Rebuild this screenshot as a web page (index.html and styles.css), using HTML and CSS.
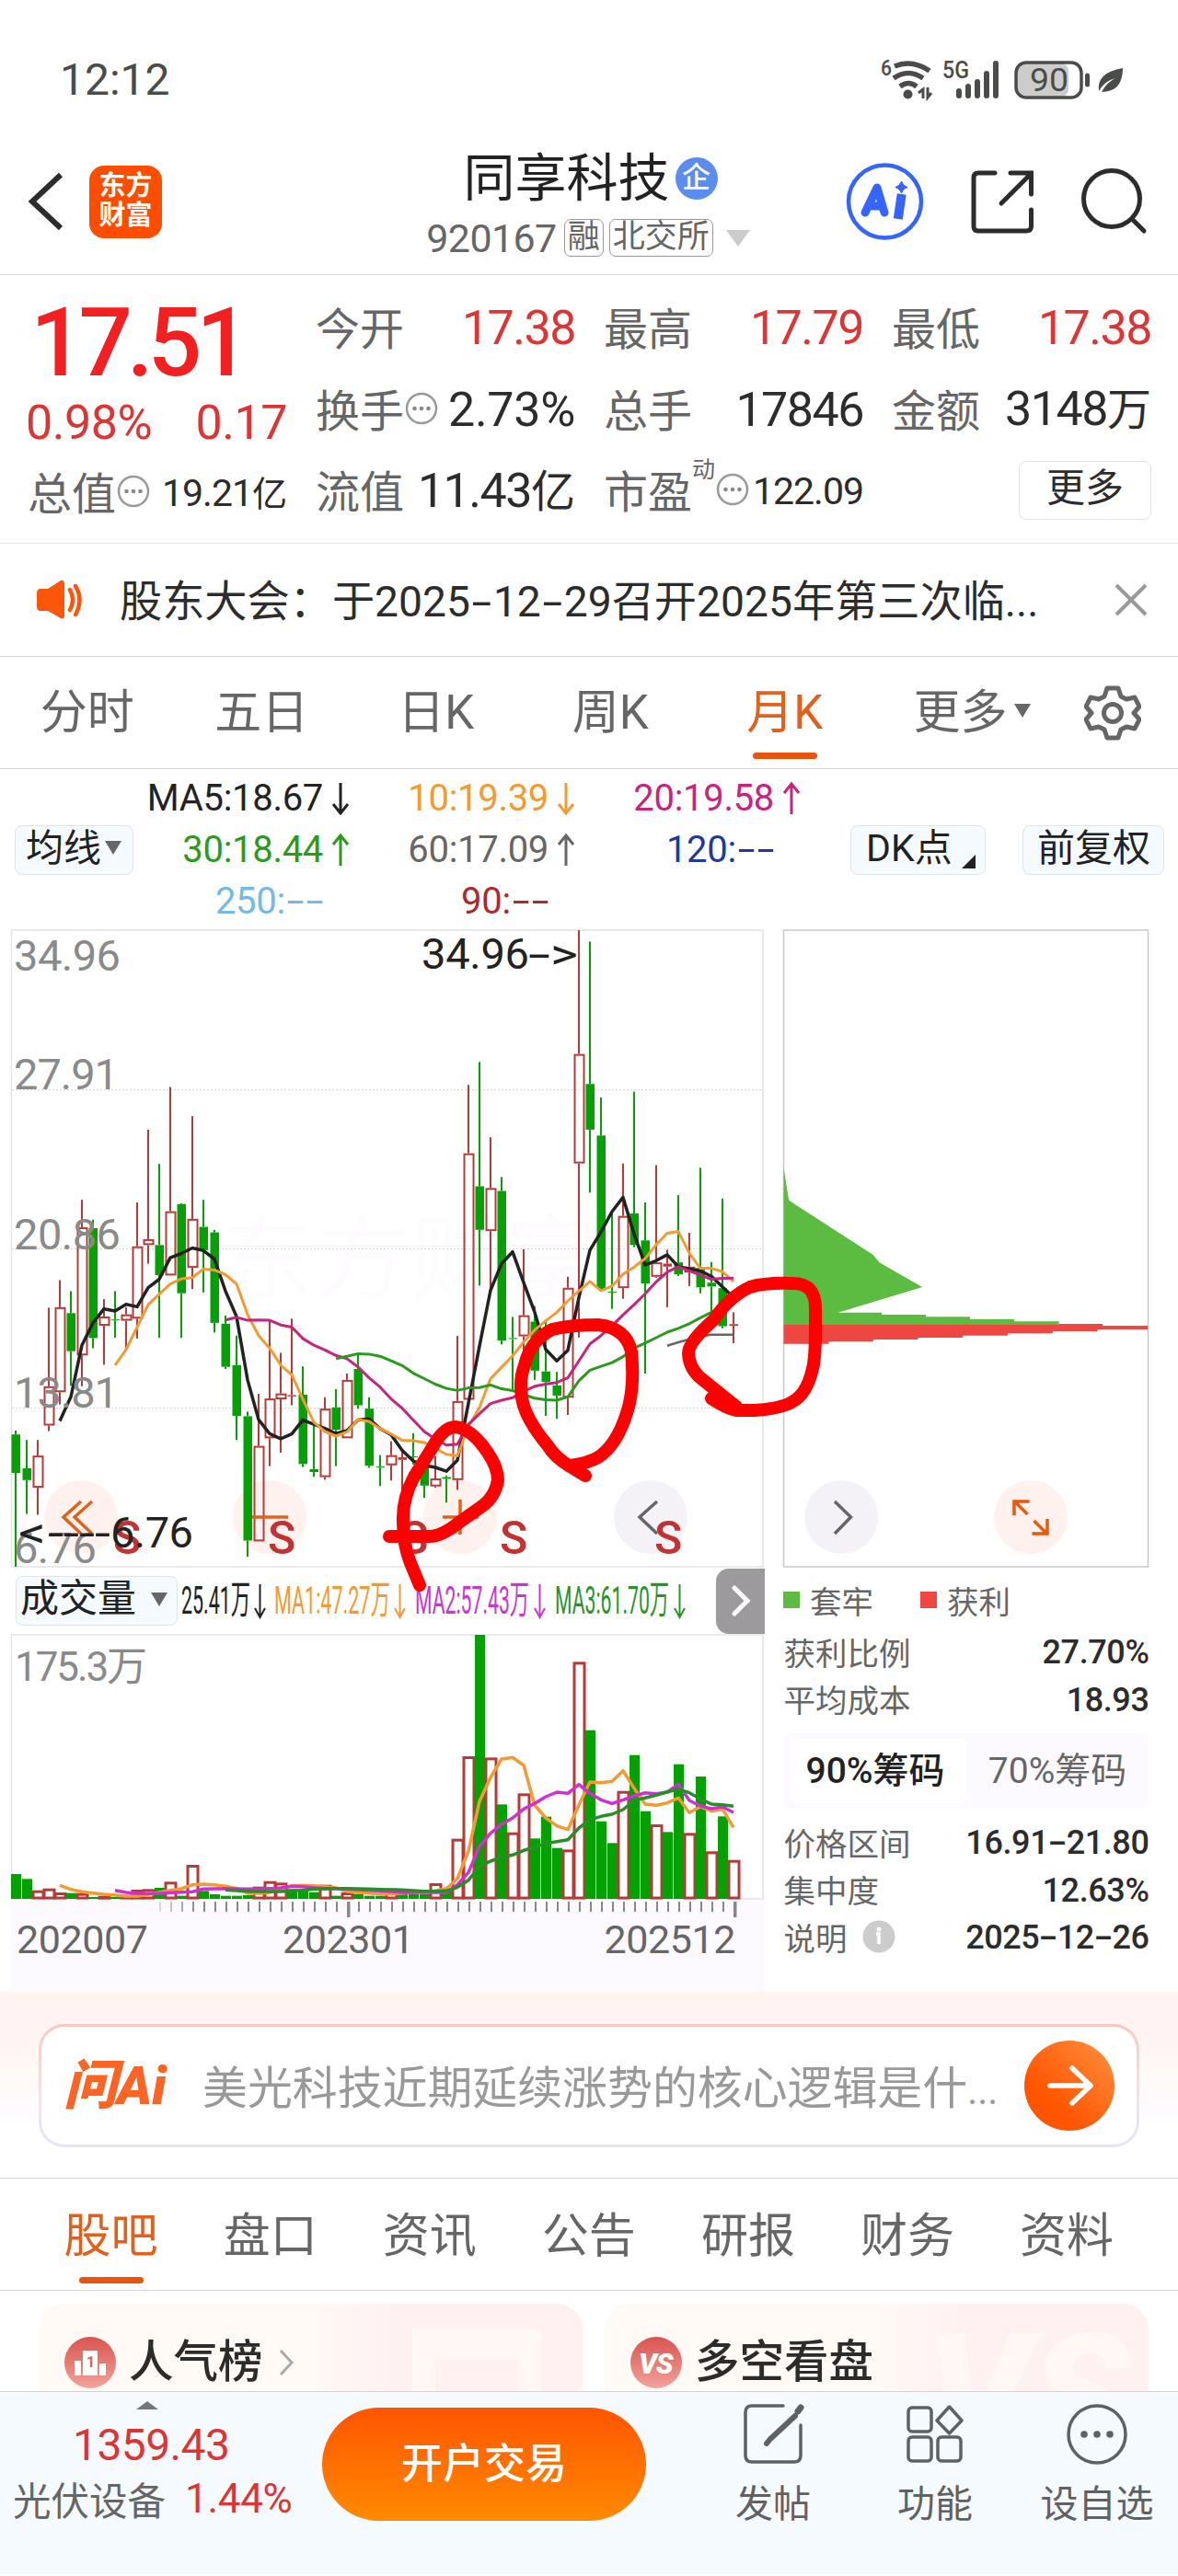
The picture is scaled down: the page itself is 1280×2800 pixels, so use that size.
FILE: index.html
```html
<!DOCTYPE html>
<html lang="zh-CN">
<head>
    <meta charset="UTF-8">
    <meta name="viewport" content="width=device-width, initial-scale=1.0">
    <title>同享科技 920167</title>
    <link rel="stylesheet" href="styles.css">
</head>
<body>
    <svg class="defs">
        <symbol id="arrow-down" viewBox="0 0 20 36"><path d="M10 1V34M2 24L10 34L18 24"/></symbol>
        <symbol id="arrow-up" viewBox="0 0 20 36"><path d="M10 35V2M2 12L10 2L18 12"/></symbol>
        <symbol id="more-dots" viewBox="0 0 36 36">
            <circle cx="18" cy="18" r="16" fill="none" stroke="#999" stroke-width="2.500"/>
            <g fill="#888"><circle cx="10.500" cy="18" r="2.300"/><circle cx="18" cy="18" r="2.300"/><circle cx="25.500" cy="18" r="2.300"/></g>
        </symbol>
    </svg>

    <!-- Status bar -->
    <div class="status">
        <span class="clock">12:12</span>
        <svg class="status-icons" width="272" height="50" viewBox="954 60 272 50">
            <g fill="none" stroke="#4a4c4a" stroke-width="5.500">
                <path d="M972 71Q991 63 1010 76"/>
                <path d="M971 84Q987 73 1003 84"/>
                <path d="M978 93Q987 86 996 93"/>
            </g>
            <circle cx="986.500" cy="101.500" r="5" fill="#4a4c4a"/>
            <path d="M998 100L1003 96V106M1008 94V105L1012 100" fill="none" stroke="#4a4c4a" stroke-width="3"/>
            <text x="957" y="81" font-size="23" font-weight="500" textLength="12" lengthAdjust="spacingAndGlyphs">6</text>
            <text x="1024" y="84" font-size="25" font-weight="500" textLength="29" lengthAdjust="spacingAndGlyphs">5G</text>
            <path d="M1042 98V103M1052 93V103M1062 88V103M1072 79V103M1082 68V103" stroke="#4a4c4a" stroke-width="6" stroke-linecap="round"/>
            <rect x="1105" y="68" width="56" height="36" rx="8" fill="#ccc"/>
            <rect x="1104" y="67" width="71" height="38" rx="11" fill="none" stroke="#4a4c4a" stroke-width="3.500"/>
            <text x="1119" y="98" font-size="35" textLength="42" lengthAdjust="spacingAndGlyphs">90</text>
            <path d="M1181.500 81V91" stroke="#4a4c4a" stroke-width="5" stroke-linecap="round"/>
            <path d="M1194 98Q1191 78 1220 73Q1220 99 1197 99Q1203 88 1212 84Q1200 87 1194 98Z" fill="#4a4c4a"/>
        </svg>
    </div>

    <!-- Title bar -->
    <header class="header">
        <div class="header-left">
            <svg width="42" height="70" viewBox="0 0 42 70"><path d="M38 6L7 35L38 64" fill="none" stroke="#2c2c2c" stroke-width="6"/></svg>
            <div class="logo">东方<br>财富</div>
        </div>
        <div class="title">
            <div class="title-name">同享科技<span class="badge">企</span></div>
            <div class="title-code"><span class="code">920167</span><span class="tag">融</span><span class="tag">北交所</span><i class="tri tri-light"></i></div>
        </div>
        <div class="header-right">
            <svg width="86" height="86" viewBox="918 176 86 86">
                <circle cx="961.500" cy="219" r="39.500" fill="#fff" stroke="#3565fa" stroke-width="4.500"/>
                <!-- mark of the assistant -->
                <path d="M940 231L953 204L961 231M947 224H958" fill="none" stroke="#3565fa" stroke-width="9" stroke-linecap="round" stroke-linejoin="round"/>
                <path d="M979 216L976.500 233" stroke="#3565fa" stroke-width="10" stroke-linecap="square"/>
                <path d="M979.500 197Q981 202 986 203.500Q981 205 979.500 210Q978 205 973 203.500Q978 202 979.500 197Z" fill="#3565fa" stroke="#3565fa"/>
            </svg>
            <svg width="72" height="72" viewBox="1052 183 72 72">
                <path d="M1080 188H1062Q1057 188 1057 193V246Q1057 251 1062 251H1114Q1119.500 251 1119.500 246V228M1097 188H1119.500V211M1119 189L1087 221" fill="none" stroke="#2c2c2c" stroke-width="5" stroke-linecap="round"/>
            </svg>
            <svg width="74" height="74" viewBox="1174 182 74 74">
                <circle cx="1208" cy="216" r="30.500" fill="none" stroke="#2c2c2c" stroke-width="5"/>
                <path d="M1230 238L1243 251" stroke="#2c2c2c" stroke-width="5" stroke-linecap="round"/>
            </svg>
        </div>
    </header>

    <!-- Quote -->
    <section class="quote">
        <div class="quote-main">
            <div class="price">17.51</div>
            <div class="change"><span>0.98%</span><span>0.17</span></div>
            <div class="cell"><label>总值</label><svg class="dots"><use href="#more-dots"/></svg><b class="small">19.21<em class="small-unit">亿</em></b></div>
        </div>
        <div class="quote-grid">
            <div class="cell"><label>今开</label><b class="up">17.38</b></div>
            <div class="cell"><label>最高</label><b class="up">17.79</b></div>
            <div class="cell"><label>最低</label><b class="up">17.38</b></div>
            <div class="cell"><label>换手</label><svg class="dots"><use href="#more-dots"/></svg><b class="rate">2.73%</b></div>
            <div class="cell"><label>总手</label><b>17846</b></div>
            <div class="cell"><label>金额</label><b>3148<em>万</em></b></div>
            <div class="cell"><label>流值</label><b>11.43<em>亿</em></b></div>
            <div class="cell"><label>市盈</label><sup>动</sup><svg class="dots"><use href="#more-dots"/></svg><b class="small">122.09</b></div>
            <div class="cell cell-more"><span class="more-btn">更多</span></div>
        </div>
    </section>

    <!-- Notice -->
    <div class="notice">
        <svg width="54" height="44" viewBox="38 630 54 44">
            <path d="M44 640H52L66 631Q70 630 70 635V669Q70 674 66 672L52 664H44Q40 664 40 659V645Q40 640 44 640Z" fill="#fb560a"/>
            <path d="M76 641Q82 652 76 663M82 637Q91 652 82 668" fill="none" stroke="#fb560a" stroke-width="4.500" stroke-linecap="round"/>
        </svg>
        <p class="notice-text">股东大会：于2025<i class="dash">-</i>12<i class="dash">-</i>29召开2025年第三次临...</p>
        <svg width="36" height="36" viewBox="0 0 36 36"><path d="M2 2L34 34M34 2L2 34" stroke="#999" stroke-width="4"/></svg>
    </div>

    <!-- Period tabs -->
    <nav class="periods">
        <span>分时</span>
        <span>五日</span>
        <span>日K</span>
        <span>周K</span>
        <span class="active">月K</span>
        <span class="period-more">更多<i class="tri"></i></span>
        <svg width="62" height="62" viewBox="0 0 62 62" fill="none" stroke="#666" stroke-width="5" stroke-linejoin="round">
            <path d="M25 4H37L40 13L46 16L55 14L60 24L54 31L60 38L55 48L46 46L40 49L37 58H25L22 49L16 46L7 48L2 38L8 31L2 24L7 14L16 16L22 13Z"/>
            <circle cx="31" cy="31" r="9.500"/>
        </svg>
    </nav>

    <!-- Moving average legend -->
    <div class="ma-bar">
        <span class="chip-btn ma-btn">均线<i class="tri"></i></span>
        <div class="ma-list">
            <span class="c-black">MA5:18.67<svg class="arrow"><use href="#arrow-down"/></svg></span>
            <span class="c-orange">10:19.39<svg class="arrow"><use href="#arrow-down"/></svg></span>
            <span class="c-pink">20:19.58<svg class="arrow"><use href="#arrow-up"/></svg></span>
            <span class="c-green">30:18.44<svg class="arrow"><use href="#arrow-up"/></svg></span>
            <span class="c-gray">60:17.09<svg class="arrow"><use href="#arrow-up"/></svg></span>
            <span class="c-navy no-arrow">120:<i class="dash">-</i><i class="dash">-</i></span>
            <span class="c-sky no-arrow">250:<i class="dash">-</i><i class="dash">-</i></span>
            <span class="c-red no-arrow">90:<i class="dash">-</i><i class="dash">-</i></span>
        </div>
        <span class="chip-btn dk-btn">DK点<i class="corner"></i></span>
        <span class="chip-btn fq-btn">前复权</span>
    </div>

    <!-- Charts -->
    <section class="charts">
        <div class="charts-left">
            <svg class="kline" width="820" height="694" viewBox="11 1011 820 694">
                <text class="watermark" x="240" y="1405" textLength="410">东方财富</text>
                <rect x="12.500" y="1012" width="816.500" height="692" fill="none" stroke="#e2e2e2" stroke-width="1.500"/>
                <path d="M13 1185.500H829M13 1358.500H829M13 1531.500H829" stroke="#d4d4d4" stroke-dasharray="2 2"/>
                <g fill="#fff1ed">
                    <circle cx="88" cy="1650" r="40"/>
                    <circle cx="293" cy="1650" r="40"/>
                    <circle cx="500" cy="1650" r="40"/>
                    <circle cx="707" cy="1650" r="40" fill="#f5f2f7"/>
                </g>
                <g id="candles"></g>
                <g id="averages"></g>
                <g class="axis">
                    <text x="15" y="1056" textLength="116">34.96</text>
                    <text x="15" y="1185" textLength="114">27.91</text>
                    <text x="15" y="1359" textLength="116">20.86</text>
                    <text x="15" y="1531" textLength="114">13.81</text>
                    <text x="15" y="1700" textLength="90">6.76</text>
                </g>
                <g class="signal">
                    <text x="123" y="1690">S</text>
                    <text x="291" y="1690">S</text>
                    <text x="435" y="1690">S</text>
                    <text x="543" y="1690">S</text>
                    <text x="711" y="1690">S</text>
                </g>
                <g fill="none" stroke="#e0601c" stroke-width="3.500">
                    <path d="M88 1633L69 1650L88 1668M100 1633L81 1650L100 1668"/>
                    <path d="M274 1650H313"/>
                    <path d="M481 1650H520M500 1631V1669"/>
                    <path d="M714 1633L695 1650L714 1668" stroke="#666"/>
                </g>
                <g class="extreme">
                    <text x="458" y="1054" textLength="117">34.96</text>
                    <text x="574" y="1054" textLength="24" lengthAdjust="spacingAndGlyphs">-</text>
                    <text x="598" y="1054" textLength="30" lengthAdjust="spacingAndGlyphs">&gt;</text>
                    <text x="20" y="1683" textLength="30" lengthAdjust="spacingAndGlyphs">&lt;</text>
                    <text x="52" y="1683" textLength="68" lengthAdjust="spacingAndGlyphs">----</text>
                    <text x="120" y="1683" textLength="90">6.76</text>
                </g>
            </svg>

            <div class="vol-bar">
                <span class="chip-btn vol-btn">成交量<i class="tri"></i></span>
                <svg class="vol-legend" width="560" height="54" viewBox="195 1714 560 54">
                    <text class="f-black" x="197" y="1755" textLength="75" lengthAdjust="spacingAndGlyphs">25.41万</text>
                    <text class="f-orange" x="298" y="1755" textLength="126" lengthAdjust="spacingAndGlyphs">MA1:47.27万</text>
                    <text class="f-purple" x="451" y="1755" textLength="124" lengthAdjust="spacingAndGlyphs">MA2:57.43万</text>
                    <text class="f-green" x="603" y="1755" textLength="124" lengthAdjust="spacingAndGlyphs">MA3:61.70万</text>
                    <g fill="none" stroke-width="2">
                        <path d="M282.500 1723V1759M277 1749L282.500 1759L288 1749" stroke="#222"/>
                        <path d="M434.500 1723V1759M429 1749L434.500 1759L440 1749" stroke="#f39b32"/>
                        <path d="M586.500 1723V1759M581 1749L586.500 1759L592 1749" stroke="#c837cf"/>
                        <path d="M738.500 1723V1759M733 1749L738.500 1759L744 1749" stroke="#2a942a"/>
                    </g>
                </svg>
                <span class="vol-next"><svg width="22" height="36" viewBox="0 0 22 36"><path d="M4 4L18 18L4 32" fill="none" stroke="#fff" stroke-width="5" stroke-linecap="round"/></svg></span>
            </div>

            <svg class="volume" width="820" height="289" viewBox="11 1777 820 289">
                <rect x="12.500" y="1778" width="816.500" height="287" fill="none" stroke="#e2e2e2" stroke-width="1.500"/>
                <text class="vol-max" x="16" y="1828" textLength="144">175.3万</text>
                <g id="bars"></g>
                <g id="volumeAverages"></g>
            </svg>

            <div class="dates">
                <svg id="ticks" width="818" height="22" viewBox="12 2066 818 22"></svg>
                <div class="date-labels"><span>202007</span><span>202301</span><span>202512</span></div>
            </div>
        </div>

        <div class="charts-right">
            <svg class="chips" width="399" height="694" viewBox="849.500 1011 399 694">
                <rect x="851" y="1012" width="396" height="692" fill="none" stroke="#c8c8c8" stroke-width="1.500"/>
                <!-- trapped and profitable holders by price -->
                <g transform="translate(820 1240) scale(.33333)">
                    <path fill="#5cbc42" d="M93 90L110 197L385 375L405 400L545 480L270 563H413V570H557V577H700V585H845V592H990V603H93Z"/>
                    <path fill="#ee4742" d="M93 603H990V600H1133V606H1280V618H1116V624H970V631H823V638H677V645H531V651H385V658H240V665H93Z"/>
                </g>
                <circle cx="913.700" cy="1650" r="40" fill="#f5f2f7"/>
                <path d="M906.500 1633L924 1650L906.500 1668" fill="none" stroke="#666" stroke-width="3.500"/>
                <circle cx="1119.500" cy="1650" r="40" fill="#fff1ed"/>
                <path d="M1118 1633H1101.500V1648M1102 1633L1116 1647M1123 1654L1137 1668M1137.500 1652V1668H1121" fill="none" stroke="#e8590c" stroke-width="3.500"/>
            </svg>
            <div class="chip-legend">
                <span><i class="sq sq-green"></i>套牢</span>
                <span><i class="sq sq-red"></i>获利</span>
            </div>
            <div class="stat"><span>获利比例</span><b>27.70%</b></div>
            <div class="stat"><span>平均成本</span><b>18.93</b></div>
            <div class="chip-tabs"><span class="on">90%筹码</span><span>70%筹码</span></div>
            <div class="stat"><span>价格区间</span><b>16.91<i class="dash">-</i>21.80</b></div>
            <div class="stat"><span>集中度</span><b>12.63%</b></div>
            <div class="stat"><span class="stat-info">说明<svg width="36" height="36" viewBox="0 0 36 36"><circle cx="18" cy="18" r="17.500" fill="#ccc"/><circle cx="18" cy="10" r="2.500" fill="#fff"/><path d="M15 15H18V26" fill="none" stroke="#fff" stroke-width="3.500"/></svg></span><b>2025<i class="dash">-</i>12<i class="dash">-</i>26</b></div>
        </div>

        <!-- hand-drawn marks -->
        <svg class="marks" width="1280" height="760" viewBox="0 1000 1280 760">
            <path d="M423 1671H467Q480 1671 500 1655L524 1638Q538 1628 541 1610Q541 1596 530 1580Q513 1554 495 1552Q482 1552 470 1574L450 1606Q437 1630 438 1655Q438 1680 446 1700L456 1724"/>
            <path d="M636 1605L618 1594Q603 1585 595 1572Q570 1542 567 1520Q564 1500 570 1485Q576 1458 600 1446Q620 1441 650 1441Q680 1444 686 1470Q690 1510 681 1537Q670 1572 650 1585Q640 1591 620 1594"/>
            <path d="M773 1521Q790 1532 800 1534H820Q850 1532 862 1524Q878 1515 884 1484Q886 1470 886 1450V1425Q887 1396 862 1396Q830 1395 815 1400Q793 1410 775 1436Q748 1460 748 1472Q749 1490 764 1501L800 1530"/>
        </svg>
    </section>

    <!-- Ask AI -->
    <section class="ask">
        <div class="ask-box">
            <span class="ask-logo">问Ai</span>
            <span class="ask-text">美光科技近期延续涨势的核心逻辑是什<span class="ellipsis">...</span></span>
            <svg width="98" height="98" viewBox="0 0 98 98">
                <linearGradient id="go" x1="1" y1="0" x2="0.300" y2="0.700"><stop offset="0" stop-color="#ff9140"/><stop offset="1" stop-color="#ff5500"/></linearGradient>
                <circle cx="49" cy="49" r="49" fill="url(#go)"/>
                <path d="M28 49H72M52 30L72 49L52 68" fill="none" stroke="#fff" stroke-width="5.500" stroke-linecap="round" stroke-linejoin="round"/>
            </svg>
        </div>
    </section>

    <!-- Section tabs -->
    <nav class="sections">
        <span class="active">股吧</span>
        <span>盘口</span>
        <span>资讯</span>
        <span>公告</span>
        <span>研报</span>
        <span>财务</span>
        <span>资料</span>
    </nav>

    <div class="cards">
        <div class="card">
            <svg class="card-art" width="300" height="95" viewBox="0 0 300 95"><path d="M115 95V28H255V95H230V61H140V95Z" fill="#fff8f4"/></svg>
            <svg width="56" height="56" viewBox="0 0 56 56">
                <linearGradient id="badge" x1="0" y1="0" x2="0" y2="1"><stop offset="0" stop-color="#d9534e"/><stop offset="1" stop-color="#f2a39b"/></linearGradient>
                <circle cx="28" cy="28" r="28" fill="url(#badge)"/>
                <path d="M11 26H18V42H11ZM20 15H36V42H20ZM38 29H45V42H38Z" fill="#fff"/>
                <text x="24" y="33" font-size="16" font-weight="700" fill="#d9605a">1</text>
            </svg>
            <span>人气榜</span>
            <svg width="18" height="30" viewBox="0 0 18 30"><path d="M3 2L15 15L3 28" fill="none" stroke="#aaa" stroke-width="3"/></svg>
        </div>
        <div class="card">
            <svg class="card-art" width="290" height="95" viewBox="0 0 290 95">
                <text x="46" y="160" class="vs-art">VS</text>
            </svg>
            <svg width="56" height="56" viewBox="0 0 56 56">
                <circle cx="28" cy="28" r="28" fill="url(#badge)"/>
                <text x="9" y="40" class="vs">VS</text>
            </svg>
            <span>多空看盘</span>
        </div>
    </div>

    <!-- Bottom bar -->
    <footer class="footer">
        <div class="index">
            <i class="tri-up"></i>
            <div class="index-value">1359.43</div>
            <div class="index-name">光伏设备<b>1.44%</b></div>
        </div>
        <div class="open-btn">开户交易</div>
        <div class="tool">
            <svg width="70" height="70" viewBox="0 0 70 70" fill="none" stroke="#5f6163" stroke-width="3.500" stroke-linecap="round">
                <path d="M46 4H12Q5 4 5 11V58Q5 65 12 65H58Q65 65 65 58V25"/>
                <path d="M59 15L32 40L28 45" stroke-width="6"/><path d="M62 10L65 6" stroke-width="7"/>
            </svg>
            <span>发帖</span>
        </div>
        <div class="tool">
            <svg width="70" height="70" viewBox="0 0 70 70" fill="none" stroke="#5f6163" stroke-width="3.500" stroke-linejoin="round">
                <rect x="6" y="6" width="25" height="26" rx="4"/><rect x="6" y="38" width="25" height="26" rx="4"/><rect x="38" y="38" width="25" height="26" rx="4"/>
                <path d="M50.500 5L64 20L50.500 34L37 20Z"/>
            </svg>
            <span>功能</span>
        </div>
        <div class="tool">
            <svg width="70" height="70" viewBox="0 0 70 70">
                <circle cx="35" cy="35" r="31" fill="none" stroke="#5f6163" stroke-width="3.500"/>
                <g fill="#5f6163"><circle cx="21" cy="35" r="3.800"/><circle cx="35" cy="35" r="3.800"/><circle cx="49" cy="35" r="3.800"/></g>
            </svg>
            <span>设自选</span>
        </div>
    </footer>

    <script src="script.js"></script>
</body>
</html>
```
FILE: styles.css
```css
body {
    margin: 0;
    width: 1280px;
    height: 2800px;
    overflow: hidden;
    background: #fff;
    color: #2c2c2c;
    font-family: Roboto, "Noto Sans CJK SC", sans-serif;
    font-weight: 400;
}
svg {
    display: block;
    flex: none;
}
b, em, i {
    font-style: normal;
    font-weight: inherit;
}
.defs {
    width: 0;
    height: 0;
    position: absolute;
}
.tri {
    display: inline-block;
    border: 9px solid transparent;
    border-top: 15px solid #666;
    border-bottom: 0;
}
.dash {
    display: inline-block;
    width: .54em;
    text-align: center;
    transform: scaleX(1.7);
}

/* Status bar */
.status {
    height: 88px;
    padding: 42px 54px 0 65px;
    display: flex;
    align-items: center;
    justify-content: space-between;
    color: #4a4c4a;
}
.clock {
    font-size: 48px;
}
.status-icons text {
    fill: #4a4c4a;
}

/* Title bar */
.header {
    height: 168px;
    padding: 0 32px 0 28px;
    display: grid;
    grid-template-columns: 1fr auto 1fr;
    align-items: center;
    border-bottom: 1px solid #d4d4d4;
}
.header-left, .header-right {
    display: flex;
    align-items: center;
    padding-top: 10px;
}
.header-left {
    gap: 27px;
}
.header-right {
    justify-content: flex-end;
    gap: 49px;
}
.logo {
    width: 79px;
    height: 79px;
    border-radius: 16px;
    background: #ff4d00;
    color: #fff;
    font-size: 29px;
    font-weight: 700;
    line-height: 32px;
    text-align: center;
    box-sizing: border-box;
    padding-top: 6px;
}
.title {
    padding: 17px 0 0 2px;
}
.title-name {
    font-size: 56px;
    line-height: 70px;
    display: flex;
    align-items: center;
    justify-content: center;
    padding-left: 5px;
    color: #222;
}
.badge {
    width: 46px;
    height: 46px;
    margin-left: 6px;
    border-radius: 50%;
    background: #5b8cf0;
    color: #fff;
    font-size: 31px;
    font-weight: 500;
    line-height: 44px;
    text-align: center;
}
.title-code {
    display: flex;
    align-items: center;
    color: #666;
    height: 56px;
    margin-top: 2px;
}
.code {
    font-size: 43px;
    letter-spacing: -.6px;
    margin-right: 8px;
}
.tag {
    height: 39px;
    line-height: 38px;
    padding: 0 3px;
    margin-right: 6px;
    border: 1.5px solid #999;
    border-radius: 7px;
    font-size: 35px;
}
.tri-light {
    margin-left: 8px;
    border-width: 18px 13px 0;
    border-top-color: #ccc;
}

/* Quote */
.quote {
    height: 292px;
    padding: 0 29px 0 30px;
    display: flex;
    gap: 31px;
    border-bottom: 1px solid #e8e8e8;
    box-sizing: border-box;
}
.quote-main {
    width: 282px;
}
.price {
    height: 108px;
    padding: 19px 0 0 3px;
    font-size: 103px;
    font-weight: 500;
    line-height: 110px;
    letter-spacing: -6px;
    color: #f22020;
}
.change {
    height: 66px;
    margin-left: -2px;
    display: flex;
    align-items: center;
    justify-content: space-between;
    font-size: 52px;
    letter-spacing: -.5px;
    color: #dd3434;
}
.quote-grid {
    padding-top: 14px;
    display: grid;
    grid-template-columns: repeat(3, 282px);
    grid-template-rows: repeat(3, 88.5px);
    column-gap: 31px;
}
.cell {
    height: 88px;
    display: flex;
    align-items: center;
    font-size: 48px;
}
.cell label {
    margin: -6px 0 0 0;
    color: #666;
}
.cell b {
    margin-left: auto;
    font-size: 52px;
    line-height: 66px;
    letter-spacing: -1.5px;
}
.cell em {
    font-size: 48px;
    letter-spacing: 0;
}
.cell .rate {
    letter-spacing: -.3px;
}
.cell .small {
    font-size: 41px;
    letter-spacing: -1px;
}
.cell .small-unit {
    font-size: 38px;
}
.cell .up {
    color: #dd3434;
}
.cell sup {
    font-size: 25px;
    color: #666;
    align-self: flex-start;
    line-height: 42px;
}
.dots {
    width: 36px;
    height: 36px;
    margin: -4px 0 0 1px;
}
.cell-more {
    justify-content: flex-end;
}
.more-btn {
    width: 142px;
    height: 62px;
    margin-top: -2px;
    border: 1.5px solid #e3e3e3;
    border-radius: 8px;
    font-size: 42px;
    line-height: 58px;
    text-align: center;
}

/* Notice */
.notice {
    height: 122px;
    padding: 0 33px 0 38px;
    display: flex;
    align-items: center;
    border-bottom: 1px solid #d4d4d4;
}
.notice-text {
    flex: 1;
    margin: -6px 0 0 38px;
    font-size: 46.200px;
    white-space: nowrap;
}

/* Period tabs */
.periods {
    height: 121px;
    display: flex;
    align-items: center;
    border-bottom: 1px solid #d4d4d4;
    font-size: 51px;
    line-height: 70px;
    color: #666;
}
.periods span {
    width: 189.500px;
    text-align: center;
}
.active {
    position: relative;
    color: #e0601c;
}
.active::after {
    content: "";
    position: absolute;
    left: 50%;
    bottom: -15px;
    width: 70px;
    height: 7px;
    margin-left: -35px;
    border-radius: 4px;
    background: #e8530e;
}
.sections .active::after {
    bottom: -15px;
}
.periods .period-more {
    width: 230px;
    display: flex;
    align-items: center;
    justify-content: center;
    gap: 7px;
}
.period-more .tri {
    margin: -4px 13px 0 0;
}

/* Moving average legend */
.ma-bar {
    height: 175px;
    padding-left: 16px;
    display: flex;
    align-items: center;
}
.chip-btn {
    box-sizing: border-box;
    height: 54px;
    border: 1.5px solid #dfe3ea;
    border-radius: 8px;
    background: #f5faff;
    display: flex;
    align-items: center;
    font-size: 41px;
    line-height: 44px;
    padding-bottom: 4px;
    color: #222;
}
.ma-btn {
    width: 129px;
    padding-left: 11px;
    gap: 4px;
}
.ma-list {
    width: 725px;
    display: grid;
    grid-template-columns: 235px 245px 245px;
    grid-auto-rows: 56px;
    font-size: 40px;
    letter-spacing: -.3px;
}
.ma-list span {
    display: flex;
    align-items: center;
    justify-content: flex-end;
    white-space: nowrap;
}
.ma-list .no-arrow {
    padding-right: 27px;
}
.arrow {
    width: 20px;
    height: 36px;
    margin-left: 9px;
    fill: none;
    stroke: currentColor;
    stroke-width: 3;
}
.c-black { color: #222; }
.c-orange { color: #f39b32; }
.c-pink { color: #c8237f; }
.c-green { color: #2a9a1e; }
.c-gray { color: #666; }
.c-navy { color: #2038a0; }
.c-sky { color: #74b9ea; }
.c-red { color: #b0282c; }
.dk-btn {
    width: 147px;
    margin-left: 54px;
    padding-left: 16px;
}
.corner {
    align-self: flex-end;
    margin: 0 0 2px 10px;
    border-left: 15px solid transparent;
    border-bottom: 15px solid #222;
}
.fq-btn {
    width: 154px;
    margin-left: 40px;
    padding-left: 15px;
}

/* Charts */
.charts {
    position: relative;
    height: 1155px;
    padding-left: 11px;
    display: flex;
    gap: 18.500px;
    margin-top: -1px;
}
.charts-left {
    width: 820px;
}
.marks {
    position: absolute;
    left: 0;
    top: -11px;
    fill: none;
    stroke: #f00;
    stroke-width: 14;
    stroke-linecap: round;
    stroke-linejoin: round;
}
.watermark {
    font-size: 100px;
    fill: #fefbff;
}
.axis text {
    font-size: 47px;
    fill: #8a8a8a;
}
.extreme {
    font-size: 47px;
    fill: #222;
}
.signal text {
    font-size: 50px;
    font-weight: 500;
    fill: #c33232;
}
.vol-bar {
    height: 72px;
    padding-left: 6px;
    display: flex;
    align-items: center;
}
.vol-btn {
    width: 176px;
    padding-left: 4px;
    gap: 16px;
    font-size: 42px;
}
.vol-legend {
    margin-left: 2px;
    font-size: 43px;
}
.f-black { fill: #222; }
.f-orange { fill: #f39b32; }
.f-purple { fill: #c837cf; }
.f-green { fill: #2a942a; }
.vol-next {
    width: 53px;
    height: 71px;
    margin-left: auto;
    border-radius: 14px 0 0 14px;
    background: #9d9a9d;
    display: flex;
    align-items: center;
    justify-content: center;
}
.vol-max {
    font-size: 44px;
    fill: #8a8a8a;
}
.dates {
    margin-left: 1px;
    width: 818px;
    height: 100px;
    background: #fdfaff;
}
.date-labels {
    padding: 0 31px 0 6px;
    display: grid;
    grid-template-columns: 289px 1fr auto;
    font-size: 43px;
    line-height: 42px;
    letter-spacing: -.4px;
    color: #666;
}
.charts-right {
    width: 399px;
}
.chip-legend {
    height: 65px;
    padding: 4px 0 0 1.500px;
    display: flex;
    align-items: center;
    gap: 51px;
    font-size: 34.500px;
    color: #666;
    box-sizing: border-box;
}
.chip-legend span {
    display: flex;
    align-items: center;
    gap: 11px;
}
.sq {
    width: 18px;
    height: 18px;
}
.sq-green { background: #5cbc42; }
.sq-red { background: #ee4742; }
.stat {
    height: 51.500px;
    padding-left: 2px;
    display: flex;
    align-items: center;
    justify-content: space-between;
    font-size: 34.500px;
    color: #666;
}
.stat b {
    padding-top: 3px;
    font-size: 36px;
    font-weight: 500;
    letter-spacing: -.4px;
    color: #2c2c2c;
}
.stat-info {
    display: flex;
    align-items: center;
    gap: 16px;
}
.chip-tabs {
    width: 382px;
    height: 70px;
    margin: 12px 0 10px 2px;
    padding: 6px 7px;
    display: flex;
    border-radius: 8px;
    background: #fdfaff;
    font-size: 39px;
    line-height: 70px;
    text-align: center;
    color: #666;
}
.chip-tabs span {
    width: 191px;
    text-indent: 8px;
}
.chip-tabs .on {
    background: #fff;
    color: #222;
    font-weight: 500;
    border-radius: 6px;
    text-indent: -6px;
}

/* Ask AI */
.ask {
    height: 203px;
    padding: 35px 42px 0;
    box-sizing: border-box;
    background: linear-gradient(#fff5ee 0, #fff3f3 14px, #fff5f4 60px, #fffaf6 85px, #fefaff 125px, #fff 145px);
    border-bottom: 1px solid #d4d4d4;
}
.ask-box {
    height: 134px;
    box-sizing: border-box;
    padding: 0 24px 0 24px;
    display: flex;
    align-items: center;
    border: 3px solid transparent;
    border-radius: 28px;
    background: linear-gradient(#fff, #fff) padding-box, linear-gradient(#f8c8c0, #f1e4ea 60%, #e4e4f4) border-box;
}
.ask-logo {
    width: 151px;
    font-size: 58px;
    font-weight: 900;
    font-style: italic;
    line-height: 70px;
    letter-spacing: 0;
    color: #fb6424;
}
.ask-text {
    flex: 1;
    margin-top: -4px;
    font-size: 48.900px;
    color: #999;
    white-space: nowrap;
}
.ellipsis {
    font-size: 42px;
}

/* Section tabs */
.sections {
    height: 121px;
    padding: 0 34px;
    display: flex;
    align-items: center;
    border-bottom: 1px solid #d4d4d4;
    font-size: 51px;
    line-height: 72px;
    color: #666;
}
.sections span {
    width: 173.100px;
    padding-top: 4px;
    margin-bottom: -1px;
    text-align: center;
}

/* Cards */
.cards {
    height: 109px;
    padding: 0 32px 0 42px;
    display: flex;
    gap: 24px;
    align-items: flex-end;
    overflow: hidden;
}
.card {
    position: relative;
    flex: 1;
    height: 95px;
    padding: 0 28px;
    display: flex;
    align-items: center;
    border-radius: 28px 28px 0 0;
    background: linear-gradient(90deg, #fffaf6 50%, #fff1f2 65%);
    font-size: 48.500px;
    line-height: 60px;
    font-weight: 500;
    box-sizing: border-box;
    padding-top: 32px;
}
.card span {
    margin: 0 16px 0 14px;
}
.card-art {
    position: absolute;
    right: 0;
    bottom: 0;
}
.vs {
    font-size: 31px;
    font-weight: 900;
    font-style: italic;
    letter-spacing: -1px;
    fill: #fff;
}
.vs-art {
    font-size: 180px;
    font-weight: 900;
    font-style: italic;
    fill: #fff8f4;
}

/* Bottom bar */
.footer {
    height: 199px;
    box-sizing: border-box;
    display: flex;
    border-top: 1px solid #cfd2da;
    background: #f5faff;
}
.index {
    width: 320px;
    padding: 10px 0 0 14px;
    display: flex;
    flex-direction: column;
    box-sizing: border-box;
}
.tri-up {
    margin-left: 134px;
    width: 0;
    border: 12px solid transparent;
    border-bottom: 9px solid #777;
    border-top: 0;
}
.index-value {
    margin: 11px 0 0 65px;
    font-size: 48px;
    line-height: 56px;
    letter-spacing: -.6px;
    color: #dd3434;
}
.index-name {
    display: flex;
    align-items: center;
    gap: 21px;
    height: 60px;
    font-size: 41.500px;
    color: #666;
}
.index-name b {
    font-size: 44px;
    letter-spacing: -.3px;
    color: #dd3434;
}
.open-btn {
    width: 352px;
    height: 123px;
    margin: 17px 50px 0 30px;
    border-radius: 62px;
    background: linear-gradient(#ff5500, #ff8a00);
    color: #fff;
    font-size: 45px;
    font-weight: 500;
    line-height: 123px;
    text-align: center;
}
.tool {
    width: 176px;
    padding-top: 11px;
    display: flex;
    flex-direction: column;
    align-items: center;
    font-size: 41px;
    line-height: 82px;
    color: #5f6163;
}
```
FILE: script.js
```js
const SVG = 'http://www.w3.org/2000/svg';
const STEP = 12;
const FIRST_X = 17;

const RED = '#b83a38';
const GREEN = '#04a004';

// [up, body top, body bottom, high, low], levels count down from the top of the pane (26) to its bottom (1532)
const candles = [
    [0, 1219, 1310, 1210, 1532], [0, 1299, 1327, 1232, 1407], [1, 1269, 1345, 1232, 1409], [1, 1105, 1198, 919, 1211],
    [1, 918, 1119, 854, 1148], [0, 932, 1022, 880, 1104], [1, 729, 1032, 664, 1105], [0, 731, 991, 711, 1015],
    [1, 940, 962, 899, 1054], [0, 947, 949, 880, 990], [1, 935, 950, 918, 1015], [1, 774, 945, 670, 992],
    [1, 757, 771, 498, 815], [0, 771, 842, 579, 990], [1, 691, 843, 397, 843], [0, 674, 885, 672, 990],
    [1, 709, 825, 466, 875], [0, 728, 783, 664, 883], [0, 741, 955, 735, 978], [0, 957, 1059, 938, 1064],
    [0, 1055, 1175, 985, 1232], [0, 1176, 1470, 1165, 1508], [1, 1246, 1472, 1123, 1472], [1, 1134, 1228, 950, 1294],
    [1, 1122, 1136, 1026, 1262], [1, 1126, 1129, 945, 1150], [0, 1125, 1289, 1058, 1296], [0, 1301, 1308, 1195, 1319],
    [1, 1158, 1320, 1131, 1326], [0, 1155, 1208, 1112, 1294], [1, 1090, 1228, 1075, 1228], [0, 1064, 1150, 1030, 1158],
    [0, 1158, 1293, 1131, 1298], [0, 1295, 1297, 1268, 1341], [1, 1268, 1292, 1235, 1328], [1, 1273, 1279, 1258, 1370],
    [0, 1271, 1273, 1216, 1290], [0, 1290, 1340, 1280, 1369], [1, 1323, 1342, 1270, 1345], [0, 1320, 1324, 1316, 1380],
    [1, 1140, 1327, 986, 1350], [1, 554, 1137, 392, 1137], [0, 632, 735, 338, 867], [1, 636, 738, 516, 880],
    [0, 643, 997, 610, 1006], [0, 991, 993, 941, 1112], [1, 937, 987, 781, 1040], [0, 952, 1068, 915, 1090],
    [0, 1070, 1095, 948, 1175], [0, 1103, 1127, 1071, 1182], [1, 872, 1132, 846, 1173], [1, 319, 578, 26, 990],
    [0, 390, 498, 53, 647], [0, 512, 875, 422, 878], [0, 881, 883, 690, 922], [1, 702, 873, 578, 898],
    [0, 696, 771, 408, 776], [0, 760, 862, 670, 1075], [1, 812, 846, 582, 848], [1, 815, 822, 782, 918],
    [0, 812, 840, 653, 844], [1, 822, 836, 742, 868], [0, 825, 871, 588, 885], [0, 860, 869, 811, 940],
    [0, 873, 963, 661, 968], [1, 958, 962, 930, 1003]
];

// first month, colour, width, levels
const averages = [
    [59, '#666', 2.5, [1009, 1001, 994, 987, 983, 983, 983]],
    [4, '#222', 3.5, [1187, 1130, 1008, 955, 922, 927, 911, 917, 872, 852, 801, 791, 778, 784, 804, 880, 940, 1090, 1184, 1217, 1229, 1218, 1185, 1195, 1205, 1217, 1210, 1185, 1182, 1205, 1220, 1257, 1282, 1292, 1297, 1306, 1280, 1145, 1010, 878, 815, 787, 860, 930, 1018, 1045, 1020, 895, 783, 740, 692, 658, 745, 818, 808, 794, 822, 827, 832, 845, 870, 895]],
    [9, '#f39b32', 3, [1055, 1018, 965, 912, 887, 863, 851, 848, 828, 830, 841, 863, 935, 985, 1015, 1055, 1078, 1135, 1190, 1212, 1223, 1213, 1184, 1188, 1205, 1218, 1233, 1234, 1238, 1252, 1266, 1270, 1200, 1155, 1087, 1060, 1033, 1000, 972, 950, 930, 903, 880, 857, 879, 868, 840, 823, 803, 770, 743, 739, 790, 826, 826, 834, 857]],
    [19, '#c8237f', 3, [948, 942, 949, 948, 949, 960, 965, 992, 1008, 1019, 1032, 1040, 1059, 1085, 1107, 1135, 1157, 1185, 1212, 1230, 1244, 1242, 1195, 1170, 1146, 1138, 1132, 1117, 1105, 1100, 1096, 1085, 1045, 1005, 985, 962, 936, 912, 886, 858, 835, 822, 832, 842, 852, 850, 849]],
    [29, '#2a9a1e', 3, [1040, 1034, 1028, 1029, 1034, 1045, 1056, 1074, 1087, 1100, 1110, 1115, 1109, 1108, 1102, 1111, 1115, 1125, 1133, 1137, 1138, 1130, 1092, 1067, 1058, 1049, 1035, 1015, 1003, 990, 977, 968, 957, 943, 930, 918, 908]]
];

// top of each volume bar, 235 is the pane top and 1096 the base line
const volumes = [
    1015, 1031, 1068, 1062, 1075, 1077, 1077, 1090, 1086, 1090, 1085, 1066, 1064, 1060, 1040, 1086, 985, 1070, 1081, 1086, 1086, 1084,
    1056, 1038, 1043, 1064, 1064, 1074, 1050, 1086, 1075, 1080, 1086, 1086, 1062, 1081, 1081, 1081, 1045, 1070, 900, 631, 235, 635,
    788, 879, 752, 899, 828, 930, 935, 323, 546, 843, 914, 744, 627, 810, 853, 878, 657, 881, 697, 941, 827, 969
];
const upVolumes = [2, 3, 4, 6, 8, 10, 11, 12, 14, 16, 22, 23, 24, 28, 30, 34, 38, 40, 41, 43, 45, 46, 50, 51, 55, 58, 61, 63, 65];

const volumeAverages = [
    [4, '#f39b32', 3.5, [1052, 1065, 1073, 1077, 1081, 1084, 1087, 1087, 1082, 1075, 1068, 1063, 1050, 1048, 1050, 1055, 1062, 1078, 1078, 1075, 1062, 1054, 1052, 1053, 1056, 1060, 1072, 1075, 1077, 1080, 1080, 1078, 1075, 1073, 1070, 1062, 1030, 940, 778, 700, 640, 635, 660, 790, 832, 858, 870, 790, 715, 717, 713, 678, 735, 787, 791, 783, 767, 815, 795, 810, 803, 863]],
    [9, '#d22fd2', 3.5, [1068, 1075, 1079, 1079, 1078, 1076, 1074, 1073, 1064, 1063, 1062, 1063, 1064, 1064, 1062, 1060, 1055, 1056, 1060, 1062, 1062, 1064, 1066, 1068, 1070, 1072, 1075, 1075, 1074, 1075, 1075, 1050, 1010, 925, 882, 853, 832, 803, 785, 763, 748, 752, 723, 752, 773, 785, 773, 760, 750, 753, 748, 722, 775, 793, 802, 796, 814]],
    [19, '#268f26', 3.5, [1067, 1069, 1071, 1072, 1072, 1072, 1070, 1068, 1064, 1063, 1062, 1062, 1063, 1064, 1065, 1066, 1067, 1069, 1071, 1071, 1070, 1058, 1035, 990, 973, 960, 953, 938, 928, 915, 909, 903, 865, 838, 827, 820, 805, 775, 767, 758, 747, 738, 750, 770, 787, 789, 794]]
];

const priceY = v => 1012 + (v - 26) / 1506 * 692;
const volumeY = v => 1778 + (v - 235) / 861 * 287;
const monthX = i => FIRST_X + i * STEP;

function add(parent, name, attrs) {
    const el = document.createElementNS(SVG, name);
    for (const key in attrs) el.setAttribute(key, attrs[key]);
    parent.appendChild(el);
}

function drawLines(parent, lines, scale) {
    lines.forEach(([start, color, width, values]) => {
        const points = values.map((v, i) => monthX(start + i) + ',' + scale(v).toFixed(1)).join(' ');
        add(parent, 'polyline', { points, fill: 'none', stroke: color, 'stroke-width': width, 'stroke-linejoin': 'round' });
    });
}

const candleLayer = document.getElementById('candles');
candles.forEach(([up, top, bottom, high, low], i) => {
    const x = monthX(i);
    const y = priceY(top);
    const height = Math.max(priceY(bottom) - y, 1);
    const wick = { x: x - 1, width: 2, fill: up ? RED : GREEN };
    add(candleLayer, 'rect', { ...wick, y: priceY(high), height: Math.max(y - priceY(high), 0) });
    add(candleLayer, 'rect', { ...wick, y: y + height, height: Math.max(priceY(low) - y - height, 0) });
    if (up && height > 4) {
        add(candleLayer, 'rect', { x: x - 4.5, y: y + 1, width: 10, height: height - 2, fill: 'none', stroke: RED, 'stroke-width': 2 });
    } else {
        add(candleLayer, 'rect', { x: x - 4.5, y, width: 9.5, height, fill: up ? RED : GREEN });
    }
});
drawLines(document.getElementById('averages'), averages, priceY);

const barLayer = document.getElementById('bars');
volumes.forEach((v, i) => {
    const x = monthX(i);
    const y = volumeY(v);
    if (upVolumes.includes(i)) {
        add(barLayer, 'rect', { x: x - 5, y: y + 1.5, width: 11, height: Math.max(2064 - y - 1.5, 1), fill: '#fff', stroke: RED, 'stroke-width': 3 });
    } else {
        add(barLayer, 'rect', { x: x - 5, y, width: 11, height: 2065 - y, fill: GREEN });
    }
});
drawLines(document.getElementById('volumeAverages'), volumeAverages, volumeY);

// month ticks, taller ones over a date label
const ticks = document.getElementById('ticks');
for (let i = 0; i <= 52; i++) {
    const x = 174 + i * STEP;
    const tall = i === 17 || i === 52;
    add(ticks, 'rect', { x: x - 1, y: 2068, width: tall ? 3.5 : 2, height: tall ? 17 : 11, fill: '#888', opacity: Math.min(1, 0.3 + i * 0.2) });
}
```
